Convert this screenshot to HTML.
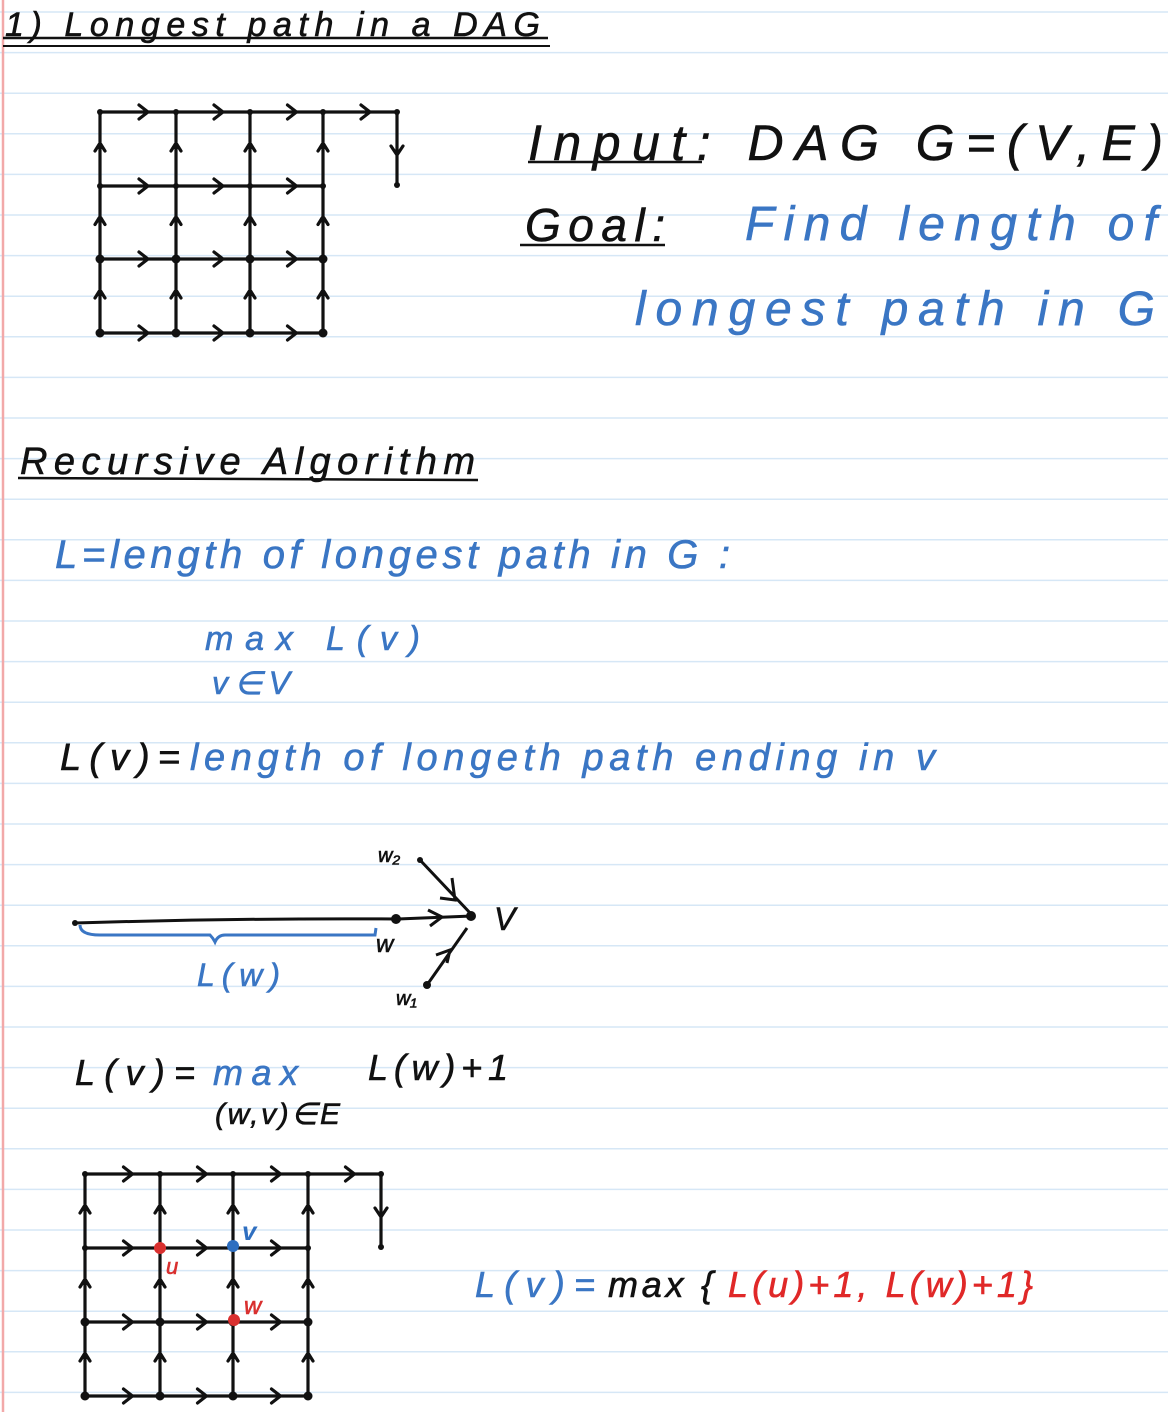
<!DOCTYPE html>
<html><head><meta charset="utf-8"><style>
html,body{margin:0;padding:0}
body{width:1168px;height:1412px;overflow:hidden;background:#fff}
svg{display:block}
text{font-family:"Liberation Sans",sans-serif;font-style:italic;stroke-width:0.6}
</style></head><body>
<svg id="s" width="1168" height="1412" viewBox="0 0 1168 1412" xmlns="http://www.w3.org/2000/svg">
<g id="lines" stroke="#d6e7f6" stroke-width="1.5"></g>
<line x1="3" y1="0" x2="3" y2="1412" stroke="#f2a9a9" stroke-width="2.5"/>
<text x="5" y="36" font-size="34" fill="#111" stroke="#111" textLength="535">1) Longest path in a DAG</text>
<line x1="3" y1="38" x2="548" y2="38" stroke="#111" stroke-width="2.5"/>
<line x1="3" y1="46" x2="550" y2="46" stroke="#111" stroke-width="2"/>
<text x="528" y="160" font-size="50" fill="#111" stroke="#111" textLength="635">Input:  DAG   G=(V,E)</text>
<line x1="528" y1="162" x2="702" y2="162" stroke="#111" stroke-width="2.5"/>
<text x="525" y="241" font-size="46" fill="#111" stroke="#111" textLength="140">Goal:</text>
<line x1="520" y1="245" x2="665" y2="245" stroke="#111" stroke-width="2.5"/>
<text x="745" y="240" font-size="48" fill="#3a76c4" stroke="#3a76c4" textLength="412">Find length of</text>
<text x="635" y="325" font-size="48" fill="#3a76c4" stroke="#3a76c4" textLength="520">longest path in G</text>
<text x="20" y="474" font-size="38" fill="#111" stroke="#111" textLength="455">Recursive Algorithm</text>
<line x1="18" y1="478" x2="478" y2="480" stroke="#111" stroke-width="2.5"/>
<text x="55" y="568" font-size="40" fill="#3a76c4" stroke="#3a76c4" textLength="675">L=length of longest path in G :</text>
<text x="205" y="650" font-size="34" fill="#3a76c4" stroke="#3a76c4" textLength="215">max  L(v)</text>
<text x="212" y="694" font-size="32" fill="#3a76c4" stroke="#3a76c4" textLength="78">v∈V</text>
<text x="60" y="770" font-size="38" fill="#111" stroke="#111" textLength="120">L(v)=</text>
<text x="190" y="770" font-size="38" fill="#3a76c4" stroke="#3a76c4" textLength="745">length of longeth path ending in v</text>
<path d="M75 923 Q240 918 398 919 L472 916" stroke="#111" stroke-width="3" fill="none"/>
<circle cx="75" cy="923" r="3" fill="#111"/><circle cx="396" cy="919" r="5" fill="#111"/><circle cx="471" cy="916" r="5" fill="#111"/>
<path d="M428 910 L442 917 L430 926" stroke="#111" stroke-width="3" fill="none"/>
<path d="M420 860 L472 915 M452 878 L455 900 L440 898" stroke="#111" stroke-width="3" fill="none"/>
<circle cx="420" cy="860" r="3" fill="#111"/>
<path d="M427 985 L467 928 M436 955 L450 950 L447 963" stroke="#111" stroke-width="3" fill="none"/>
<circle cx="427" cy="985" r="4" fill="#111"/>
<path d="M80 925 Q80 935 100 935 L210 935 Q213 938 215 942 Q218 935 225 935 L375 935 L376 928" stroke="#3a76c4" stroke-width="3" fill="none"/>
<text x="376" y="952" font-size="24" fill="#111" stroke="#111">w</text>
<text x="378" y="862" font-size="20" fill="#111" stroke="#111">w₂</text>
<text x="396" y="1005" font-size="20" fill="#111" stroke="#111">w₁</text>
<text x="494" y="930" font-size="32" fill="#111" stroke="#111">V</text>
<text x="197" y="986" font-size="32" fill="#3a76c4" stroke="#3a76c4" textLength="83">L(w)</text>
<text x="75" y="1085" font-size="36" fill="#111" stroke="#111" textLength="120">L(v)=</text>
<text x="213" y="1085" font-size="36" fill="#3a76c4" stroke="#3a76c4" textLength="85">max</text>
<text x="368" y="1080" font-size="36" fill="#111" stroke="#111" textLength="140">L(w)+1</text>
<text x="215" y="1124" font-size="30" fill="#111" stroke="#111" textLength="125">(w,v)∈E</text>
<g id="g1" stroke="#111" stroke-width="3.2" fill="none" stroke-linecap="round" stroke-linejoin="round"></g>
<g id="g2" stroke="#111" stroke-width="3.2" fill="none" stroke-linecap="round" stroke-linejoin="round"></g>
<circle cx="160" cy="1248" r="6" fill="#d9302f"/>
<circle cx="233" cy="1246" r="6" fill="#2f6fc0"/>
<circle cx="234" cy="1320" r="6" fill="#d9302f"/>
<text x="166" y="1274" font-size="22" fill="#d9302f" stroke="#d9302f">u</text>
<text x="242" y="1240" font-size="26" fill="#2f6fc0" font-weight="bold">v</text>
<text x="244" y="1314" font-size="24" fill="#d9302f" stroke="#d9302f">w</text>
<text x="475" y="1297" font-size="36" fill="#3a76c4" stroke="#3a76c4" textLength="120">L(v)=</text>
<text x="608" y="1297" font-size="36" fill="#111" stroke="#111" textLength="105">max {</text>
<text x="728" y="1297" font-size="36" fill="#e02828" stroke="#e02828" textLength="305">L(u)+1, L(w)+1}</text>
</svg>
<script>
var NS="http://www.w3.org/2000/svg";
var L=document.getElementById('lines');
for(var y=12;y<1412;y+=40.6){var l=document.createElementNS(NS,'line');l.setAttribute('x1',0);l.setAttribute('x2',1168);l.setAttribute('y1',y);l.setAttribute('y2',y);L.appendChild(l);}
function grid(id,X,Y){
 var g=document.getElementById(id),d='';
 d+='M'+X[0]+' '+Y[0]+'H'+X[4]+'V'+(Y[1]-1);
 for(var r=1;r<4;r++)d+='M'+X[0]+' '+Y[r]+'H'+X[3];
 for(var c=0;c<4;c++)d+='M'+X[c]+' '+Y[0]+'V'+Y[3];
 for(var r=0;r<4;r++){var n=r==0?4:3;for(var c=0;c<n;c++){var m=(X[c]+X[c+1])/2+10,yy=Y[r];d+='M'+(m-9)+' '+(yy-7)+'L'+m+' '+yy+'L'+(m-9)+' '+(yy+7);}}
 for(var r=0;r<3;r++)for(var c=0;c<4;c++){var m=(Y[r]+Y[r+1])/2-6,xx=X[c];d+='M'+(xx-5)+' '+(m+8)+'L'+xx+' '+m+'L'+(xx+5)+' '+(m+8);}
 var m=(Y[0]+Y[1])/2+6;d+='M'+(X[4]-6)+' '+(m-9)+'L'+X[4]+' '+m+'L'+(X[4]+6)+' '+(m-9);
 var p=document.createElementNS(NS,'path');p.setAttribute('d',d);g.appendChild(p);
 for(var r=0;r<4;r++)for(var c=0;c<(r==0?5:4);c++){var ci=document.createElementNS(NS,'circle');ci.setAttribute('cx',X[c]);ci.setAttribute('cy',Y[r]);ci.setAttribute('r',r>=2?4.5:3);ci.setAttribute('fill','#111');ci.setAttribute('stroke','none');g.appendChild(ci);}
 var ci=document.createElementNS(NS,'circle');ci.setAttribute('cx',X[4]);ci.setAttribute('cy',Y[1]-1);ci.setAttribute('r',3);ci.setAttribute('fill','#111');ci.setAttribute('stroke','none');g.appendChild(ci);
}
grid('g1',[100,176,250,323,397],[112,186,259,333]);
grid('g2',[85,160,233,308,381],[1174,1248,1322,1396]);
</script>
</body></html>
